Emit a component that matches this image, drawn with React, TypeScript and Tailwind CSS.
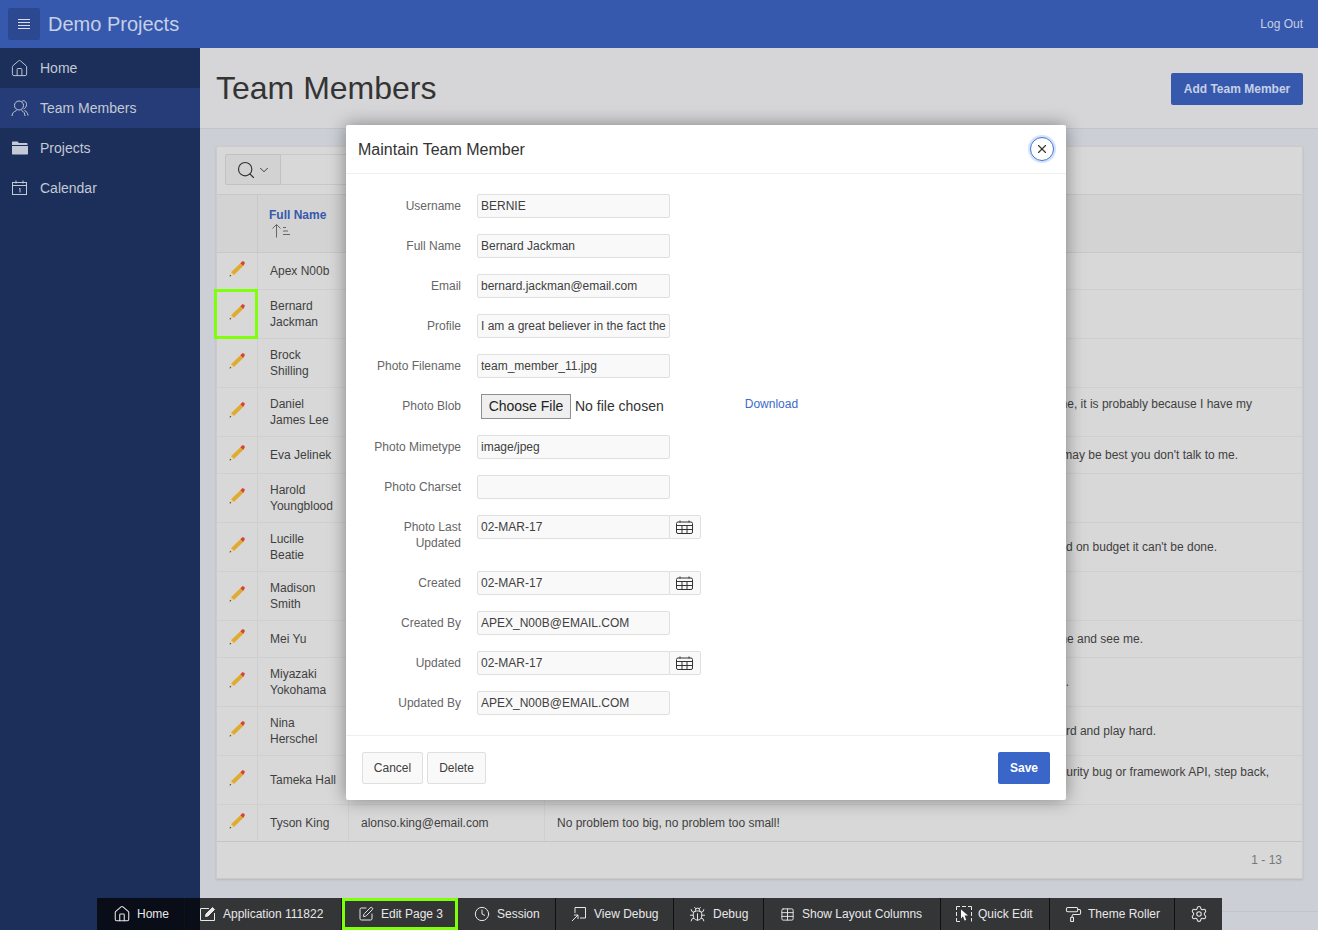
import React from "react";
import { Bug, Clock, House, PaintRoller, Search, Settings, ChevronDown, SquarePen, Table, X } from "lucide-react";

const font = "font-['Liberation_Sans',Arial,sans-serif]";

type Row = {
  name: React.ReactNode;
  tall?: boolean;
  note?: string;
  notePad?: string;
  top?: boolean;
  marked?: boolean;
};

const rows: Row[] = [
  { name: "Apex N00b" },
  { name: <>Bernard<br />Jackman</>, tall: true, marked: true },
  { name: <>Brock<br />Shilling</>, tall: true },
  { name: <>Daniel<br />James Lee</>, tall: true, top: true, note: "If you cannot get hold of me, it is probably because I have my", notePad: "pr-[50px]" },
  { name: "Eva Jelinek", note: "If I am wearing my headphones it may be best you don't talk to me.", notePad: "pr-[64px]" },
  { name: <>Harold<br />Youngblood</>, tall: true },
  { name: <>Lucille<br />Beatie</>, tall: true, note: "If you think it can't be delivered on time and on budget it can't be done.", notePad: "pr-[85px]" },
  { name: <>Madison<br />Smith</>, tall: true },
  { name: "Mei Yu", note: "If you need anything at all just come and see me.", notePad: "pr-[159px]" },
  { name: <>Miyazaki<br />Yokohama</>, tall: true, note: "I will always get the job done.", notePad: "pr-[233px]" },
  { name: <>Nina<br />Herschel</>, tall: true, note: "Work hard and play hard.", notePad: "pr-[146px]" },
  { name: "Tameka Hall", tall: true, top: true, note: "security bug or framework API, step back,", notePad: "pr-[33px]" },
];

function Pencil() {
  return (
    <svg className="-mt-[4px] -ml-[1px]" width="18" height="18" viewBox="0 0 18 18">
      <path d="M1.5 16.5 L3 12.2 L6 15 Z" fill="#e8d3a8" />
      <path d="M1.5 16.5 L2.1 14.7 L3.4 15.9 Z" fill="#3c3c3c" />
      <path d="M3 12.2 L12.6 3 L15.4 5.8 L6 15 Z" fill="#e0ac2f" />
      <path d="M12.4 3.2 L14 1.6 C14.8 1 15.6 1.2 16.2 1.8 C16.9 2.5 17 3.3 16.4 4 L15.2 6 Z" fill="#d5423a" />
    </svg>
  );
}

function TableRow({ row }: { row: Row }) {
  return (
    <div className={`flex border-b border-[#cfcfcf] text-xs leading-4 text-[#3f3f3f] ${row.tall ? "h-[49px]" : "h-[37px]"}`}>
      <div className="relative flex w-[41px] shrink-0 items-center justify-center border-r border-[#cfcfcf]">
        <Pencil />
        {row.marked && <div className="absolute -top-[1px] -right-[1px] -bottom-[1px] -left-[3px] border-[3px] border-[#80ff0a]" />}
      </div>
      <div className="flex w-[91px] shrink-0 items-center border-r border-[#cfcfcf] pl-[12px]">
        <span>{row.name}</span>
      </div>
      <div className="w-[196px] shrink-0 border-r border-[#cfcfcf]" />
      <div className={`flex-1 text-right ${row.notePad ?? ""} ${row.top ? "pt-[8px]" : "flex items-center justify-end"}`}>
        <span>{row.note}</span>
      </div>
    </div>
  );
}

function Field({ label, value, date, tall }: { label: React.ReactNode; value: string; date?: boolean; tall?: boolean }) {
  return (
    <div className={`flex items-start ${tall ? "h-[56px]" : "h-[40px]"}`}>
      <label className="w-[115px] pt-[4px] text-right text-xs leading-4 text-[#666]">{label}</label>
      <div className="ml-[16px] flex">
        <input
          readOnly
          value={value}
          className="h-6 w-[193px] rounded-[2px] border border-[#dfdfdf] bg-[#f9f9f9] px-[3px] text-xs text-[#404040] outline-none"
        />
        {date && (
          <div className="-ml-px flex h-6 w-[32px] items-center justify-center rounded-r-[2px] border border-[#dfdfdf] bg-[#f9f9f9] pr-[2px] pb-[1px]">
            <svg width="17" height="14" viewBox="0 0 17 14" fill="none" stroke="#333" strokeWidth="1">
              <rect x=".5" y="2" width="16" height="11.5" rx="1.5" />
              <path d="M.5 5.5H16.5M.5 9.5H16.5M6 5.5V13.5M11 5.5V13.5M4 .5V2.5M13 .5V2.5" />
            </svg>
          </div>
        )}
      </div>
    </div>
  );
}

function Modal() {
  return (
    <div className="absolute top-[125px] left-[346px] z-10 h-[675px] w-[720px] rounded-[2px] bg-white shadow-[0_0_18px_rgba(0,0,0,0.4)]">
      <div className="flex h-[49px] items-center justify-between border-b border-[#f0f0f0] pr-[12px] pl-[12px]">
        <h2 className="pt-[2px] text-base text-[#333]">Maintain Team Member</h2>
        <button className="flex h-6 w-6 items-center justify-center rounded-full border border-[#3f74d6] bg-white text-[#333] shadow-[0_0_0_2px_rgba(90,140,230,0.25)]">
          <X size={14} strokeWidth={2} />
        </button>
      </div>
      <div className="h-[562px] border-b border-[#f0f0f0] pt-[20px]">
        <Field label="Username" value="BERNIE" />
        <Field label="Full Name" value="Bernard Jackman" />
        <Field label="Email" value="bernard.jackman@email.com" />
        <Field label="Profile" value="I am a great believer in the fact the" />
        <Field label="Photo Filename" value="team_member_11.jpg" />
        <div className="flex h-[41px] items-start">
          <label className="w-[115px] pt-[4px] text-right text-xs leading-4 text-[#666]">Photo Blob</label>
          <button className="ml-[20px] h-[25px] w-[90px] border border-[#8f8f8f] bg-[#efefef] text-[14px] text-[#222]">Choose File</button>
          <span className="ml-[4px] pt-[4px] text-[14px] leading-4 text-[#333]">No file chosen</span>
          <a className="ml-[81px] pt-[2px] text-xs leading-4 text-[#3b6cc9]">Download</a>
        </div>
        <Field label="Photo Mimetype" value="image/jpeg" />
        <Field label="Photo Charset" value="" />
        <Field label={<>Photo Last<br />Updated</>} value="02-MAR-17" date tall />
        <Field label="Created" value="02-MAR-17" date />
        <Field label="Created By" value="APEX_N00B@EMAIL.COM" />
        <Field label="Updated" value="02-MAR-17" date />
        <Field label="Updated By" value="APEX_N00B@EMAIL.COM" />
      </div>
      <div className="flex items-center justify-between px-[16px] pt-[16px]">
        <div className="flex gap-[4px]">
          <button className="h-8 w-[61px] rounded-[2px] border border-[#dfdfdf] bg-[#f9f9f9] text-xs text-[#404040]">Cancel</button>
          <button className="h-8 w-[59px] rounded-[2px] border border-[#dfdfdf] bg-[#f9f9f9] text-xs text-[#404040]">Delete</button>
        </div>
        <button className="h-8 w-[52px] rounded-[2px] bg-[#3b66c9] text-xs font-bold text-white">Save</button>
      </div>
    </div>
  );
}

const appIcon = (
  <svg width="16" height="16" viewBox="0 0 16 16" fill="none" stroke="currentColor">
    <path d="M9 2.5H.5V14.5H14.5V7" />
    <path d="M5.5 10.5L6 8L12.5 1.5L14.5 3.5L8 10Z" fill="currentColor" />
  </svg>
);
const viewDebugIcon = (
  <svg width="16" height="16" viewBox="0 0 16 16" fill="none" stroke="currentColor">
    <path d="M4 7V1.5H14.5V12H9" />
    <path d="M1 15L7 9M3 9H7V13" />
  </svg>
);
const quickEditIcon = (
  <svg width="16" height="16" viewBox="0 0 16 16" fill="none" stroke="currentColor">
    <path d="M.5 4V.5H4M6 .5H10M12 .5H15.5V4M.5 6V10M.5 12V15.5H4M15.5 6V10M15.5 12V15.5" />
    <path d="M5 3.5L12 9.5H8.6L10.2 14L8.6 14.6L6.9 10.3L5 12.5Z" fill="#fff" stroke="none" />
  </svg>
);

const tools = [
  { label: "Home", w: "w-[88px]", pad: "pl-4 gap-[6px]", icon: <House size={18} strokeWidth={1.4} /> },
  { label: "Application 111822", w: "w-[157px]", pad: "pl-[15px] gap-[7px]", icon: appIcon },
  { label: "Edit Page 3", w: "w-[116px]", pad: "pl-[13px] gap-[7px]", icon: <SquarePen size={16} strokeWidth={1.5} />, marked: true },
  { label: "Session", w: "w-[98px]", pad: "pl-4 gap-[7px]", icon: <Clock size={16} strokeWidth={1.5} /> },
  { label: "View Debug", w: "w-[118px]", pad: "pl-[15px] gap-[7px]", icon: viewDebugIcon },
  { label: "Debug", w: "w-[90px]", pad: "pl-[15px] gap-[7px]", icon: <Bug size={17} strokeWidth={1.4} /> },
  { label: "Show Layout Columns", w: "w-[177px]", pad: "pl-4 gap-[7px]", icon: <Table size={15} strokeWidth={1.5} /> },
  { label: "Quick Edit", w: "w-[109px]", pad: "pl-[15px] gap-[6px]", icon: quickEditIcon },
  { label: "Theme Roller", w: "w-[125px]", pad: "pl-[15px] gap-[6px]", icon: <PaintRoller size={17} strokeWidth={1.5} /> },
  { label: "", w: "w-[47px]", pad: "pl-[15px]", icon: <Settings size={18} strokeWidth={1.4} /> },
];

function DevToolbar() {
  return (
    <div className="absolute bottom-0 left-[97px] z-20 flex h-8 bg-[linear-gradient(90deg,#090d17_103px,#343537_103px)] text-xs text-[#e8e8e8]">
      {tools.map((t) => (
        <div
          key={t.label || "settings"}
          className={`flex items-center ${t.pad} ${t.w} ${t.marked ? "border-[3px] border-[#80ff0a]" : t.label ? "border-r border-[#111]" : ""}`}
        >
          {t.icon}
          {t.label && <span>{t.label}</span>}
        </div>
      ))}
    </div>
  );
}

const nav = [
  {
    label: "Home",
    icon: <House size={19} strokeWidth={1.2} />,
  },
  {
    label: "Team Members",
    active: true,
    icon: (
      <svg width="18" height="18" viewBox="0 0 18 18" fill="none" stroke="currentColor" strokeWidth="1">
        <circle cx="8" cy="6.5" r="4.5" />
        <path d="M11 2.2C13 1 15.5 2.5 15.5 5.5C15.5 8 14 9.5 12.5 10M1 17C1 14 3 12.5 5.5 11.5M10.5 11.5C12.5 12.5 14 14 14 17M13.5 11.5C15.5 12.5 17 14 17 16.5" />
      </svg>
    ),
  },
  {
    label: "Projects",
    icon: (
      <svg width="16" height="14" viewBox="0 0 16 14" fill="currentColor">
        <path d="M0 1.5C0 .8.5.5 1 .5H5.5L7 2H14.5C15.2 2 15.5 2.4 15.5 3V4H0Z" />
        <path d="M0 5H16V12.5C16 13.2 15.6 13.5 15 13.5H1C.4 13.5 0 13.2 0 12.5Z" />
      </svg>
    ),
  },
  {
    label: "Calendar",
    icon: (
      <svg width="16" height="16" viewBox="0 0 16 16" fill="none" stroke="currentColor">
        <rect x=".5" y="2.5" width="14" height="12" />
        <path d="M.5 5.5H14.5M4 .5V3.5M11 .5V3.5M7 9L8 8.3V12.5" />
      </svg>
    ),
  },
];

export default function App() {
  return (
    <div className={`relative flex h-[930px] flex-col overflow-hidden ${font}`}>
      <header className="flex h-12 shrink-0 items-center justify-between bg-[#3759ad] pr-[15px] pl-2">
        <div className="flex items-center gap-2">
          <button className="flex h-8 w-8 items-center justify-center rounded-[2px] bg-[#2b4890] text-[#d9dee9]">
            <svg width="14" height="12" viewBox="0 0 14 12" fill="none" stroke="currentColor">
              <path d="M1 1.5H13M1 4.5H13M1 7.5H13M1 10.5H13" />
            </svg>
          </button>
          <span className="text-[20px] text-[#c6d0e6]">Demo Projects</span>
        </div>
        <a className="text-xs text-[#c6d0e6]">Log Out</a>
      </header>
      <div className="flex flex-1">
        <nav className="w-[200px] shrink-0 bg-[#1c2f5a] text-[14px] text-[#c3c9d5]">
          {nav.map((n) => (
            <div key={n.label} className={`flex h-10 items-center ${n.active ? "bg-[#263c78]" : ""}`}>
              <span className="flex w-[40px] justify-center pr-[1px]">{n.icon}</span>
              <span>{n.label}</span>
            </div>
          ))}
        </nav>
        <main className="flex flex-1 flex-col bg-[#ccd0d6]">
          <div className="flex h-[81px] shrink-0 items-center justify-between border-b border-[#c4c5c8] bg-[#d6d6d8] pr-[15px] pl-4">
            <h1 className="text-[32px] text-[#343434]">Team Members</h1>
            <button className="mt-[1px] h-8 w-[132px] rounded-[2px] bg-[#3759ad] text-xs font-bold text-[#c6d0e6]">Add Team Member</button>
          </div>
          <section className="mt-[17px] ml-[16px] h-[733px] w-[1087px] border border-[#cbcbcb] bg-[#d8d8d8] shadow-[0_1px_2px_rgba(0,0,0,0.12)]">
            <div className="flex h-[48px] items-start border-b border-[#c8c8c8] pt-[7px] pl-2">
              <div className="flex h-[31px] w-[56px] items-center justify-center gap-[1px] rounded-l-[2px] border border-[#c2c2c2] bg-[#d2d2d2] text-[#333]">
                <Search size={20} strokeWidth={1.4} />
                <ChevronDown size={14} strokeWidth={1.6} />
              </div>
              <div className="h-[31px] w-[400px] border-y border-r border-[#c8c8c8]" />
            </div>
            <div className="flex h-[58px] border-b border-[#c8c8c8] bg-[#d3d3d3] text-xs">
              <div className="w-[41px] shrink-0 border-r border-[#c8c8c8]" />
              <div className="w-[91px] shrink-0 border-r border-[#c8c8c8] pt-[12px] pl-[11px]">
                <div className="font-bold text-[#3759ad]">Full Name</div>
                <svg className="ml-[2px]" width="20" height="15" viewBox="0 0 20 15" fill="none" stroke="#666">
                  <path d="M5.5 14.5V1.5M1.5 5.5L5.5 1.5L9.5 5.5M12 4.5H15M12 8H17M12 11.5H19" />
                </svg>
              </div>
              <div className="w-[196px] shrink-0 border-r border-[#c8c8c8]" />
            </div>
            {rows.map((r, i) => (
              <TableRow key={i} row={r} />
            ))}
            <div className="flex h-[37px] border-b border-[#c4c4c4] text-xs leading-4 text-[#3f3f3f]">
              <div className="flex w-[41px] shrink-0 items-center justify-center border-r border-[#cfcfcf]">
                <Pencil />
              </div>
              <div className="flex w-[91px] shrink-0 items-center border-r border-[#cfcfcf] pl-[12px]">Tyson King</div>
              <div className="flex w-[196px] shrink-0 items-center border-r border-[#cfcfcf] pl-[12px]">alonso.king@email.com</div>
              <div className="flex flex-1 items-center pl-[12px]">No problem too big, no problem too small!</div>
            </div>
            <div className="flex h-[35px] items-center justify-end pr-[20px] text-xs text-[#777]">1 - 13</div>
          </section>
          <div className="mt-[32px] flex-1 border-t border-[#c4c5c8]" />
        </main>
      </div>
      <Modal />
      <DevToolbar />
    </div>
  );
}
